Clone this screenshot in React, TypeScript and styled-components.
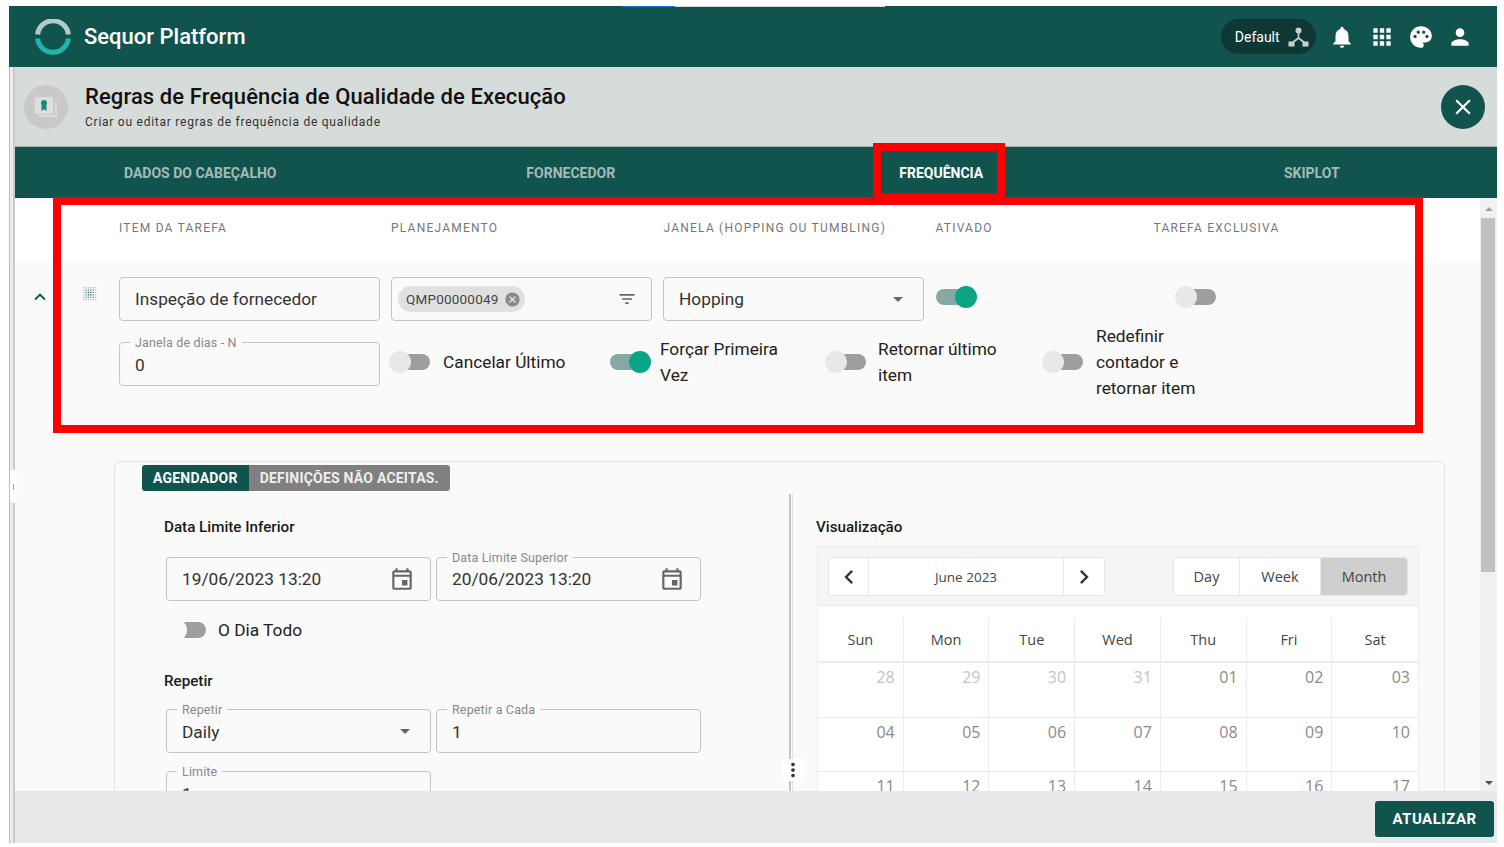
import React from 'react';
import styled, { createGlobalStyle } from 'styled-components';
import {
  MdNotifications,
  MdApps,
  MdPalette,
  MdPerson,
  MdClose,
  MdKeyboardArrowUp,
  MdFilterList,
  MdCancel,
  MdArrowDropDown,
  MdOutlineEvent,
  MdMoreVert,
  MdChevronLeft,
  MdChevronRight,
} from 'react-icons/md';

const GlobalStyle = createGlobalStyle`
  html, body {
    margin: 0;
    padding: 0;
    background: #fff;
    font-family: Roboto, "Liberation Sans", sans-serif;
    overflow: hidden;
  }
  * { box-sizing: border-box; }
`;

const Screen = styled.div`
  position: relative;
  width: 1504px;
  height: 847px;
  padding: 6px 7px 4px 9px;
`;

const Frame = styled.div`
  height: 100%;
  display: flex;
  flex-direction: column;
`;

const TopBar = styled.header`
  position: relative;
  flex: 0 0 61px;
  display: flex;
  align-items: center;
  justify-content: space-between;
  padding: 0 17px 0 26px;
  background: #11544d;
  color: #fff;
`;

const LoadingLine = styled.div`
  position: absolute;
  top: 0;
  left: 613px;
  width: 263px;
  height: 1px;
  background: linear-gradient(to right, #1976d2 0 53px, #d8d8d8 53px);
`;

const Brand = styled.div`
  display: flex;
  align-items: center;
  gap: 13px;
  font-size: 22px;
  font-weight: 500;
`;

const TopActions = styled.div`
  display: flex;
  align-items: center;
`;

const ProfilePill = styled.div`
  display: flex;
  align-items: center;
  gap: 8px;
  width: 95px;
  height: 35px;
  padding-left: 14px;
  margin-right: 7px;
  border-radius: 18px;
  background: #0e3835;
  font-size: 14px;
`;

const TopIcon = styled.span`
  display: flex;
  justify-content: center;
  width: 39.3px;
  font-size: 26px;
`;

const Body = styled.div`
  flex: 1;
  min-height: 0;
  display: flex;
`;

const SideStrip = styled.div`
  flex: 0 0 6px;
  background: #ececec;
  border-left: 1px solid #bdbdbd;
  border-right: 2px solid #c9c9c9;
`;

const SideHandle = styled.div`
  position: absolute;
  left: 10px;
  top: 470px;
  width: 7px;
  height: 33px;
  display: flex;
  align-items: center;
  justify-content: center;
  background: #fff;
  border-radius: 3px;
  color: #333;
  font-size: 18px;
`;

const Main = styled.main`
  flex: 1;
  min-width: 0;
  display: flex;
  flex-direction: column;
`;

const TitleBar = styled.div`
  flex: 0 0 80px;
  display: flex;
  align-items: center;
  padding: 0 12px 0 9px;
  background: #d5dcd9;
  border-bottom: 1px solid #a9b5b2;
`;

const TitleText = styled.div`
  flex: 1;
  margin-left: 17px;
`;

const Title = styled.div`
  font-size: 22px;
  font-weight: 500;
  line-height: 28px;
  color: #111;
  letter-spacing: 0.1px;
`;

const Subtitle = styled.div`
  margin-top: 3px;
  font-size: 12px;
  line-height: 16px;
  letter-spacing: 0.75px;
  color: #333;
`;

const CloseButton = styled.button`
  width: 44px;
  height: 44px;
  display: flex;
  align-items: center;
  justify-content: center;
  padding: 0;
  border: 0;
  border-radius: 50%;
  background: #11544d;
  color: #fff;
  font-size: 26px;
`;

const Tabs = styled.nav`
  flex: 0 0 51px;
  display: grid;
  grid-template-columns: repeat(4, 1fr);
  background: #11544d;
`;

const Tab = styled.div<{ $active?: boolean }>`
  display: flex;
  align-items: center;
  justify-content: center;
  font-size: 14px;
  font-weight: 700;
  color: ${props => (props.$active ? '#fff' : '#a3bbb7')};
`;

const Content = styled.div`
  flex: 1;
  min-height: 0;
  display: flex;
  overflow: hidden;
`;

const Scroller = styled.div`
  flex: 1;
  min-width: 0;
  background: #fafafa;
`;

const ColumnHeads = styled.div`
  height: 65px;
  display: grid;
  grid-template-columns: 272px 272.5px 272px 218px 1fr;
  padding: 21px 0 0 104px;
  background: #fff;
`;

const ColumnHead = styled.div`
  font-size: 12px;
  line-height: 18px;
  letter-spacing: 1.22px;
  color: #777;
`;

const ItemRow = styled.div`
  display: grid;
  grid-template-columns: 104px 1fr;
  padding-top: 14px;
`;

const RowHandles = styled.div`
  display: flex;
  align-items: flex-start;
  padding: 9px 0 0 14px;
  color: #11544d;
  font-size: 22px;
  gap: 31px;
`;

const FieldsTop = styled.div`
  display: grid;
  grid-template-columns: 261px 261px 261px 228px 1fr;
  column-gap: 11px;
`;

const Field = styled.div<{ $h?: number }>`
  position: relative;
  height: ${props => props.$h ?? 44}px;
  display: flex;
  align-items: center;
  padding: 0 15px;
  background: #fafafa;
  border: 1px solid #c4c4c4;
  border-radius: 4px;
  font-size: 17.3px;
  color: #333;
`;

const FieldValue = styled.span<{ $offset?: boolean }>`
  flex: 1;
  padding-top: ${props => (props.$offset ? 2 : 0)}px;
  min-width: 0;
`;

const Legend = styled.span`
  position: absolute;
  top: -8px;
  left: 10px;
  padding: 0 5px;
  background: #fafafa;
  font-size: 12.5px;
  line-height: 15px;
  letter-spacing: 0.15px;
  color: #888;
`;

const Chip = styled.span`
  display: inline-flex;
  align-items: center;
  gap: 5px;
  height: 26px;
  padding: 0 4px 0 8px;
  margin-left: -9px;
  border-radius: 13px;
  background: #e0e0e0;
  font-size: 13.5px;
  letter-spacing: 0.2px;
  color: #444;
  svg { font-size: 17px; color: #8a8a8a; }
`;

const FieldIcon = styled.span<{ $size?: number; $shift?: number }>`
  display: flex;
  color: #666;
  font-size: ${props => props.$size ?? 24}px;
  margin-right: ${props => props.$shift ?? 0}px;
`;

const TopSwitchCell = styled.div<{ $left?: number }>`
  height: 40px;
  display: flex;
  align-items: center;
  padding-left: ${props => props.$left ?? 1}px;
`;

const SwitchTrack = styled.span<{ $on?: boolean }>`
  position: relative;
  flex: 0 0 41px;
  display: block;
  width: 41px;
  height: 22px;
  &::before {
    content: '';
    position: absolute;
    top: 3px;
    left: ${props => (props.$on ? 0 : 12)}px;
    width: 29px;
    height: 16px;
    border-radius: 8px;
    background: ${props => (props.$on ? '#86a8a3' : '#9e9e9e')};
  }
`;

const SwitchThumb = styled.span<{ $on?: boolean; $faint?: boolean }>`
  position: absolute;
  top: 0;
  left: ${props => (props.$on ? 19 : 0)}px;
  width: 22px;
  height: 22px;
  border-radius: 50%;
  background: ${props => (props.$on ? '#0aa584' : props.$faint ? '#fafafa' : '#e8e8e8')};
`;

const FieldsBottom = styled.div`
  display: flex;
  align-items: center;
  height: 44px;
  margin-top: 21px;
`;

const NumberField = styled(Field)`
  flex: 0 0 261px;
  margin-right: 9px;
`;

const SwitchItem = styled.div<{ $w: number; $gap: number }>`
  flex: 0 0 ${props => props.$w}px;
  display: flex;
  align-items: center;
  gap: ${props => props.$gap}px;
  margin-bottom: 4px;
`;

const SwitchLabel = styled.span<{ $w?: number }>`
  ${props => (props.$w ? `width: ${props.$w}px;` : '')}
  font-size: 17.3px;
  line-height: 26px;
  color: #222;
`;

const Card = styled.section`
  margin: 75px 35px 0 99px;
  padding-top: 3px;
  background: #fafafa;
  border: 1px solid #e4e4e4;
  border-radius: 6px 6px 0 0;
`;

const Pills = styled.div`
  display: flex;
  margin-left: 27px;
  height: 26px;
`;

const Pill = styled.div<{ $active?: boolean }>`
  display: flex;
  align-items: center;
  padding: 0 11px;
  background: ${props => (props.$active ? '#11544d' : '#808080')};
  border-radius: ${props => (props.$active ? '3px 0 0 3px' : '0 3px 3px 0')};
  color: ${props => (props.$active ? '#fff' : '#eee')};
  font-size: 14px;
  font-weight: 700;
  letter-spacing: 0.22px;
`;

const Columns = styled.div`
  display: grid;
  grid-template-columns: 674px 4px 1fr;
`;

const LeftColumn = styled.div`
  padding-left: 49px;
`;

const Heading = styled.div<{ $top: number; $left?: number }>`
  margin-top: ${props => props.$top}px;
  margin-left: ${props => props.$left ?? 0}px;
  font-size: 15.2px;
  font-weight: 500;
  line-height: 20px;
  color: #1b1b1b;
`;

const FieldPair = styled.div<{ $top: number }>`
  display: grid;
  grid-template-columns: 265px 265px;
  column-gap: 5px;
  margin: ${props => props.$top}px 0 0 2px;
`;

const AllDay = styled.div`
  display: flex;
  align-items: center;
  gap: 12px;
  height: 24px;
  margin: 17px 0 0 1px;
`;

const Splitter = styled.div`
  position: relative;
  margin-top: 3px;
  background: #fafafa;
  border-left: 2px solid #c4c4c4;
  border-right: 1px solid #e0e0e0;
`;

const SplitterDots = styled.div`
  position: absolute;
  top: 265px;
  left: -9px;
  display: flex;
  color: #333;
  font-size: 22px;
  background: #fff;
`;

const RightColumn = styled.div`
  padding-left: 23px;
`;

const Calendar = styled.div`
  width: 602px;
  margin: 9px 0 0 1px;
  border: 1px solid #ececec;
  background: #fff;
  font-family: "Open Sans", Roboto, sans-serif;
`;

const CalendarBar = styled.div`
  height: 59px;
  display: flex;
  justify-content: space-between;
  padding: 10px 10px 0;
  background: #f5f5f5;
  border-bottom: 1px solid #ececec;
`;

const ButtonGroup = styled.div`
  height: 39px;
  display: flex;
  overflow: hidden;
  border: 1px solid #e4e4e4;
  border-radius: 4px;
  background: #fff;
`;

const CalButton = styled.div<{ $w: number; $active?: boolean }>`
  width: ${props => props.$w}px;
  display: flex;
  align-items: center;
  justify-content: center;
  background: ${props => (props.$active ? '#cfcfcf' : '#fff')};
  border-right: ${props => (props.$active ? 0 : '1px solid #e8e8e8')};
  font-size: 14.5px;
  color: #444;
`;

const DateLabel = styled(CalButton)`
  font-size: 13.5px;
`;

const NavButton = styled(CalButton)`
  font-size: 28px;
  color: #333;
`;

const WeekRow = styled.div`
  display: grid;
  grid-template-columns: repeat(7, 1fr);
  border-bottom: 2px solid #ececec;
`;

const WeekDay = styled.div`
  height: 44px;
  margin-top: 11px;
  display: flex;
  align-items: center;
  justify-content: center;
  border-right: 1px solid #ececec;
  font-size: 14.5px;
  color: #444;
  &:last-child { border-right: 0; }
`;

const DaysGrid = styled.div`
  display: grid;
  grid-template-columns: repeat(7, 1fr);
  grid-auto-rows: 54.5px;
`;

const DayCell = styled.div<{ $muted?: boolean }>`
  padding: 2px 8px 0 0;
  text-align: right;
  border-right: 1px solid #ececec;
  border-bottom: 1px solid #ececec;
  font-size: 16px;
  line-height: 25px;
  color: ${props => (props.$muted ? '#c4c4c4' : '#8a8a8a')};
  &:nth-child(7n) { border-right: 0; }
`;

const Scrollbar = styled.div`
  flex: 0 0 17px;
  position: relative;
  background: #f1f1f1;
`;

const ScrollThumb = styled.div`
  position: absolute;
  top: 20px;
  left: 1px;
  width: 14px;
  height: 354px;
  background: #c1c1c1;
`;

const ScrollArrow = styled.span<{ $down?: boolean }>`
  position: absolute;
  left: 5px;
  ${props => (props.$down ? 'bottom: 6px;' : 'top: 9px;')}
  border-left: 4px solid transparent;
  border-right: 4px solid transparent;
  ${props => (props.$down ? 'border-top: 4px solid #505050;' : 'border-bottom: 4px solid #a3a3a3;')}
`;

const Footer = styled.footer`
  flex: 0 0 52px;
  display: flex;
  align-items: flex-start;
  justify-content: flex-end;
  padding: 10px 3px 0 0;
  background: #e7e8e8;
`;

const SaveButton = styled.button`
  width: 119px;
  height: 36px;
  padding: 0;
  border: 0;
  border-radius: 3px;
  background: #11544d;
  color: #fff;
  font-family: Roboto, sans-serif;
  font-size: 15px;
  font-weight: 700;
  letter-spacing: 0.5px;
`;

const Highlight = styled.div<{ $x: number; $y: number; $w: number; $h: number }>`
  position: absolute;
  left: ${props => props.$x}px;
  top: ${props => props.$y}px;
  width: ${props => props.$w}px;
  height: ${props => props.$h}px;
  border: 8px solid #ff0000;
  pointer-events: none;
`;

const Logo = () => (
  <svg width="36" height="36" viewBox="0 0 36 36">
    <path d="M2.6 15.5 A15.5 15.5 0 0 1 33.4 15.5" fill="none" stroke="#b3cbc8" strokeWidth="5" />
    <path d="M2.6 19.5 A15.5 15.5 0 0 0 33.4 19.5" fill="none" stroke="#1fb5ad" strokeWidth="5" />
  </svg>
);

const TreeIcon = () => (
  <svg width="21" height="20" viewBox="0 0 21 20" fill="#c9d2d0">
    <circle cx="10.5" cy="3.5" r="3" />
    <rect x="0.5" y="14.5" width="6" height="5" />
    <rect x="14.5" y="14.5" width="6" height="5" />
    <path d="M10.5 6 V11 L4 16 M10.5 11 L17 16" fill="none" stroke="#c9d2d0" strokeWidth="1.6" />
  </svg>
);

const CertificateAvatar = () => (
  <svg width="44" height="44" viewBox="0 0 44 44">
    <circle cx="22" cy="22" r="22" fill="#c9c9c9" />
    <path d="M15 30 H31 V17 H33 V32 H15 Z" fill="#dcdcdc" />
    <rect x="11" y="12" width="18" height="17" rx="1.5" fill="#dedede" />
    <circle cx="20" cy="18" r="3" fill="#14897f" />
    <path d="M17.5 20 V26 L20 24.3 L22.5 26 V20 Z" fill="#14897f" />
  </svg>
);

const DragGrid = () => {
  const dots: React.ReactElement[] = [];
  for (let row = 0; row < 6; row++) {
    for (let col = 0; col < 6; col++) {
      const inner = row > 0 && row < 5 && col > 0 && col < 5;
      dots.push(
        <rect
          key={`${row}-${col}`}
          x={1 + col * 2.4}
          y={1 + row * 2.4}
          width="1.3"
          height="1.3"
          fill="#11544d"
          opacity={inner ? (row > 1 && row < 4 && col > 1 && col < 4 ? 1 : 0.65) : 0.3}
        />
      );
    }
  }
  return (
    <svg width="16" height="16" viewBox="0 0 16 16">
      {dots}
    </svg>
  );
};

const Switch = ({ on, faint }: { on?: boolean; faint?: boolean }) => (
  <SwitchTrack $on={on}>
    <SwitchThumb $on={on} $faint={faint} />
  </SwitchTrack>
);

const weekDays = ['Sun', 'Mon', 'Tue', 'Wed', 'Thu', 'Fri', 'Sat'];
const days = [
  '28', '29', '30', '31', '01', '02', '03',
  '04', '05', '06', '07', '08', '09', '10',
  '11', '12', '13', '14', '15', '16', '17',
];

export default function App() {
  return (
    <Screen>
      <GlobalStyle />
      <Frame>
        <TopBar>
          <LoadingLine />
          <Brand>
            <Logo />
            Sequor Platform
          </Brand>
          <TopActions>
            <ProfilePill>
              Default
              <TreeIcon />
            </ProfilePill>
            <TopIcon><MdNotifications /></TopIcon>
            <TopIcon><MdApps /></TopIcon>
            <TopIcon><MdPalette /></TopIcon>
            <TopIcon><MdPerson /></TopIcon>
          </TopActions>
        </TopBar>
        <Body>
          <SideStrip />
          <Main>
            <TitleBar>
              <CertificateAvatar />
              <TitleText>
                <Title>Regras de Frequência de Qualidade de Execução</Title>
                <Subtitle>Criar ou editar regras de frequência de qualidade</Subtitle>
              </TitleText>
              <CloseButton><MdClose /></CloseButton>
            </TitleBar>
            <Tabs>
              <Tab>DADOS DO CABEÇALHO</Tab>
              <Tab>FORNECEDOR</Tab>
              <Tab $active>FREQUÊNCIA</Tab>
              <Tab>SKIPLOT</Tab>
            </Tabs>
            <Content>
              <Scroller>
                <ColumnHeads>
                  <ColumnHead>ITEM DA TAREFA</ColumnHead>
                  <ColumnHead>PLANEJAMENTO</ColumnHead>
                  <ColumnHead>JANELA (HOPPING OU TUMBLING)</ColumnHead>
                  <ColumnHead>ATIVADO</ColumnHead>
                  <ColumnHead>TAREFA EXCLUSIVA</ColumnHead>
                </ColumnHeads>
                <ItemRow>
                  <RowHandles>
                    <MdKeyboardArrowUp />
                    <DragGrid />
                  </RowHandles>
                  <div>
                    <FieldsTop>
                      <Field><FieldValue>Inspeção de fornecedor</FieldValue></Field>
                      <Field>
                        <FieldValue>
                          <Chip>QMP00000049<MdCancel /></Chip>
                        </FieldValue>
                        <FieldIcon $size={20} $shift={-1}><MdFilterList /></FieldIcon>
                      </Field>
                      <Field>
                        <FieldValue>Hopping</FieldValue>
                        <FieldIcon $shift={-2}><MdArrowDropDown /></FieldIcon>
                      </Field>
                      <TopSwitchCell><Switch on /></TopSwitchCell>
                      <TopSwitchCell><Switch /></TopSwitchCell>
                    </FieldsTop>
                    <FieldsBottom>
                      <NumberField>
                        <Legend>Janela de dias - N</Legend>
                        <FieldValue $offset>0</FieldValue>
                      </NumberField>
                      <SwitchItem $w={221} $gap={13}>
                        <Switch />
                        <SwitchLabel>Cancelar Último</SwitchLabel>
                      </SwitchItem>
                      <SwitchItem $w={215} $gap={9}>
                        <Switch on />
                        <SwitchLabel $w={140}>Forçar Primeira Vez</SwitchLabel>
                      </SwitchItem>
                      <SwitchItem $w={217} $gap={12}>
                        <Switch />
                        <SwitchLabel $w={130}>Retornar último item</SwitchLabel>
                      </SwitchItem>
                      <SwitchItem $w={170} $gap={13}>
                        <Switch />
                        <SwitchLabel $w={110}>Redefinir contador e retornar item</SwitchLabel>
                      </SwitchItem>
                    </FieldsBottom>
                  </div>
                </ItemRow>
                <Card>
                  <Pills>
                    <Pill $active>AGENDADOR</Pill>
                    <Pill>DEFINIÇÕES NÃO ACEITAS.</Pill>
                  </Pills>
                  <Columns>
                    <LeftColumn>
                      <Heading $top={26}>Data Limite Inferior</Heading>
                      <FieldPair $top={20}>
                        <Field>
                          <FieldValue>19/06/2023 13:20</FieldValue>
                          <FieldIcon $size={26}><MdOutlineEvent /></FieldIcon>
                        </Field>
                        <Field>
                          <Legend>Data Limite Superior</Legend>
                          <FieldValue>20/06/2023 13:20</FieldValue>
                          <FieldIcon $size={26}><MdOutlineEvent /></FieldIcon>
                        </Field>
                      </FieldPair>
                      <AllDay>
                        <Switch faint />
                        <SwitchLabel>O Dia Todo</SwitchLabel>
                      </AllDay>
                      <Heading $top={29}>Repetir</Heading>
                      <FieldPair $top={18}>
                        <Field>
                          <Legend>Repetir</Legend>
                          <FieldValue $offset>Daily</FieldValue>
                          <FieldIcon $shift={-2}><MdArrowDropDown /></FieldIcon>
                        </Field>
                        <Field>
                          <Legend>Repetir a Cada</Legend>
                          <FieldValue $offset>1</FieldValue>
                        </Field>
                      </FieldPair>
                      <FieldPair $top={18}>
                        <Field>
                          <Legend>Limite</Legend>
                          <FieldValue $offset>1</FieldValue>
                        </Field>
                      </FieldPair>
                    </LeftColumn>
                    <Splitter>
                      <SplitterDots><MdMoreVert /></SplitterDots>
                    </Splitter>
                    <RightColumn>
                      <Heading $top={26}>Visualização</Heading>
                      <Calendar>
                        <CalendarBar>
                          <ButtonGroup>
                            <NavButton $w={40}><MdChevronLeft /></NavButton>
                            <DateLabel $w={195}>June 2023</DateLabel>
                            <NavButton $w={40} $active style={{ background: '#fff' }}><MdChevronRight /></NavButton>
                          </ButtonGroup>
                          <ButtonGroup>
                            <CalButton $w={66}>Day</CalButton>
                            <CalButton $w={81}>Week</CalButton>
                            <CalButton $w={86} $active>Month</CalButton>
                          </ButtonGroup>
                        </CalendarBar>
                        <WeekRow>
                          {weekDays.map(day => <WeekDay key={day}>{day}</WeekDay>)}
                        </WeekRow>
                        <DaysGrid>
                          {days.map((day, i) => (
                            <DayCell key={day} $muted={i < 4}>{day}</DayCell>
                          ))}
                        </DaysGrid>
                      </Calendar>
                    </RightColumn>
                  </Columns>
                </Card>
              </Scroller>
              <Scrollbar>
                <ScrollArrow />
                <ScrollThumb />
                <ScrollArrow $down />
              </Scrollbar>
            </Content>
            <Footer>
              <SaveButton>ATUALIZAR</SaveButton>
            </Footer>
          </Main>
        </Body>
      </Frame>
      <SideHandle><MdMoreVert /></SideHandle>
      <Highlight $x={873} $y={143} $w={132} $h={58} />
      <Highlight $x={53} $y={197} $w={1370} $h={236} />
    </Screen>
  );
}
